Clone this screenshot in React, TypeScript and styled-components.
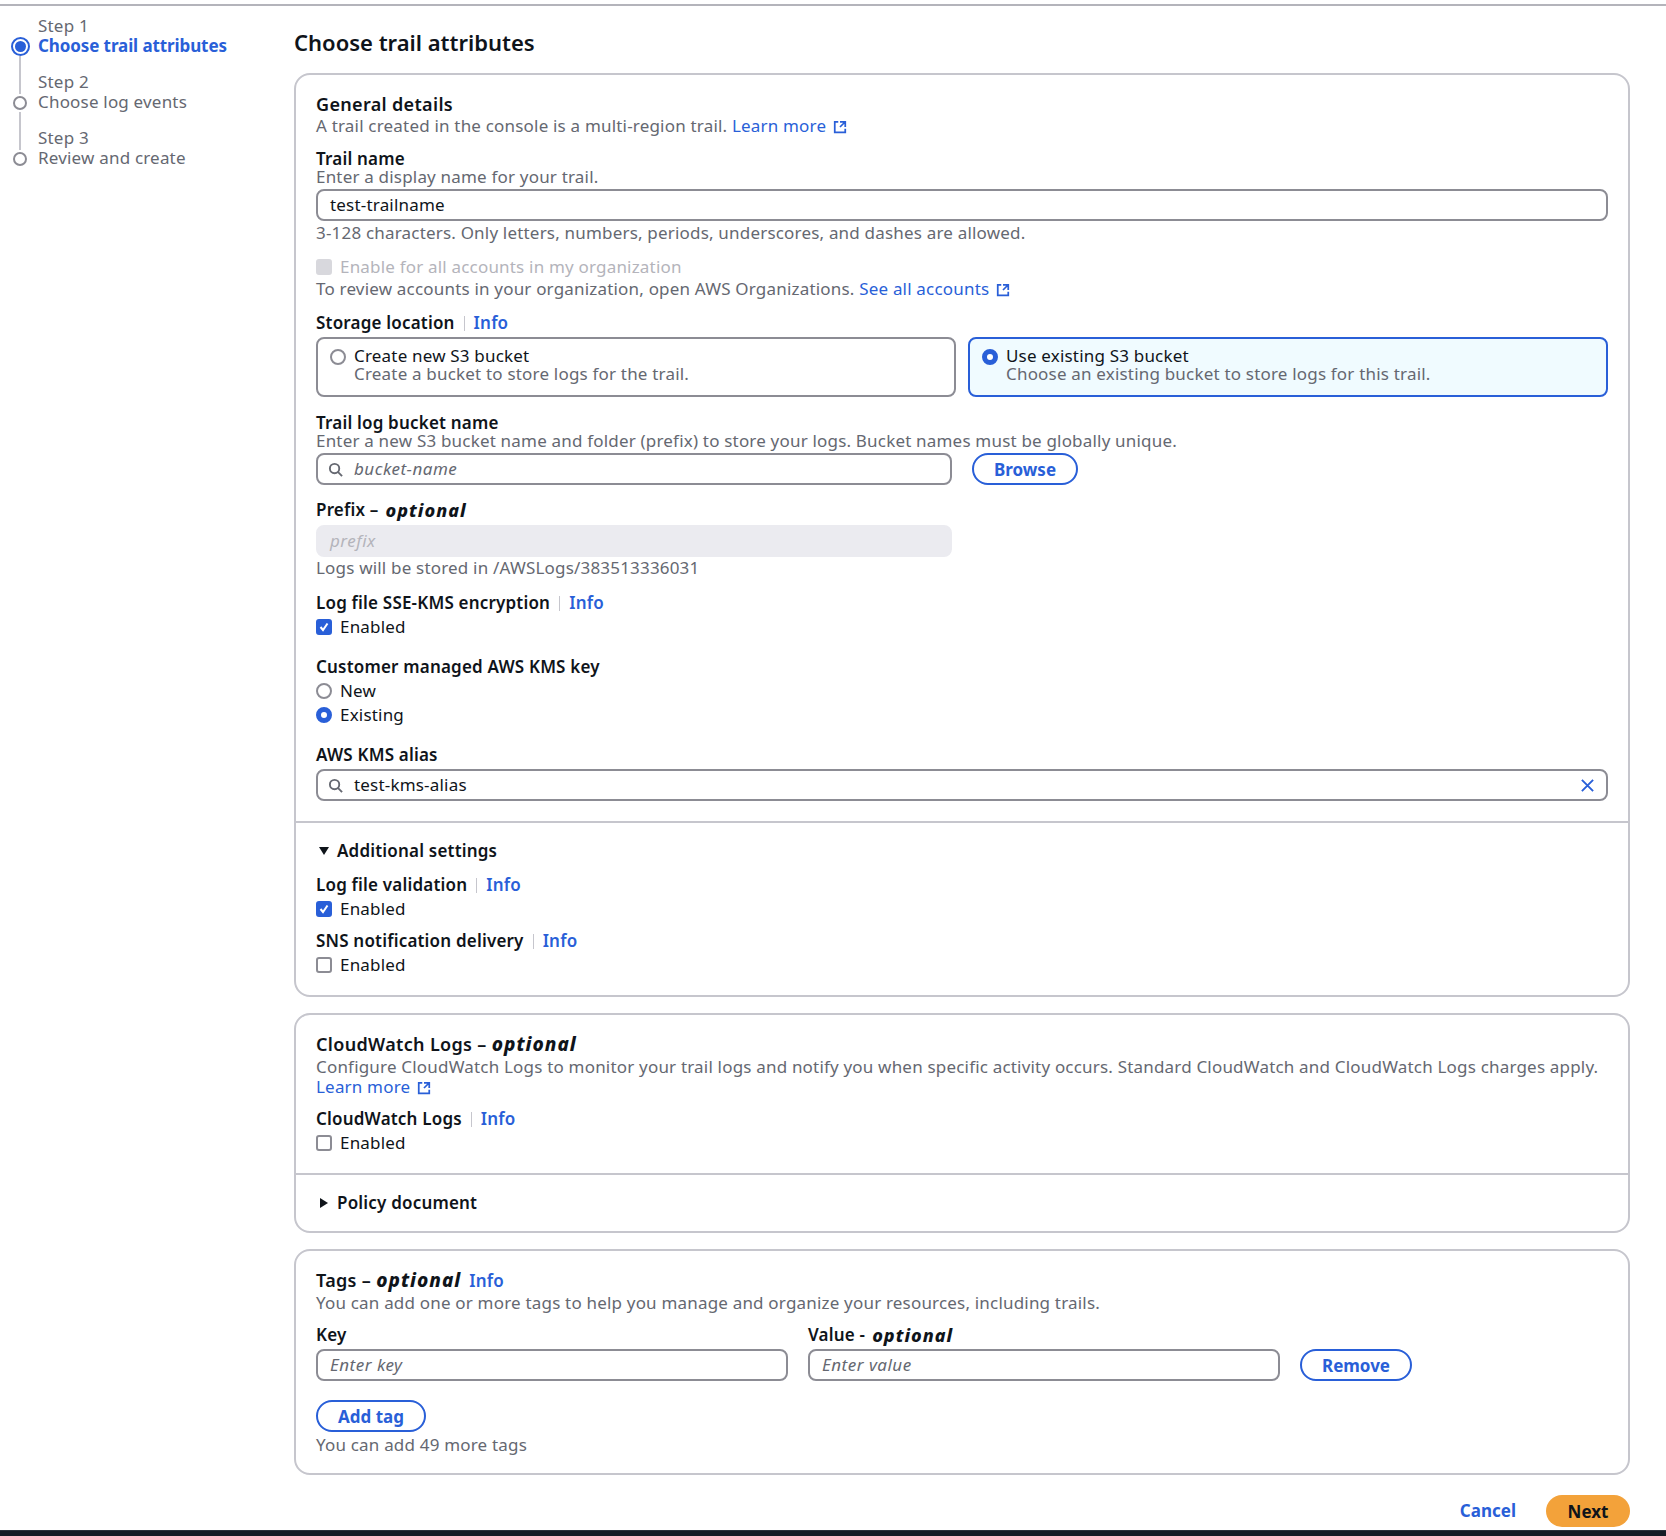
import React from "react";
import styled, { createGlobalStyle } from "styled-components";

const BLUE = "#295fd8";
const INK = "#0f141a";
const MUTED = "#656871";
const FONT = `"Noto Sans", "Open Sans", Arial, sans-serif`;

const Global = createGlobalStyle`
  html, body { margin: 0; padding: 0; background: #fff; }
  body { font-family: ${FONT}; font-size: 17px; line-height: 18px; color: ${INK}; letter-spacing: 0.19px; }
  * { box-sizing: border-box; }
  a { color: ${BLUE}; text-decoration: none; }
`;

const Page = styled.div`
  height: 1536px; overflow: hidden; display: flex; flex-direction: column; padding-top: 4px;
`;
const TopLine = styled.div`height: 2px; background: #b4b4bb; flex: none;`;
const Body = styled.div`flex: 1; display: flex; min-height: 0;`;
const Nav = styled.nav`width: 294px; flex: none; padding: 10px 0 0 10px;`;
const Step = styled.div<{ $first?: boolean }>`
  display: flex; gap: 8px; height: ${p => (p.$first ? "40px" : "56px")};
`;
const Marker = styled.div`
  width: 20px; display: flex; flex-direction: column; align-items: center; justify-content: flex-end; flex: none;
`;
const Connector = styled.div`flex: 1; width: 2px; background: #c6c6cd; margin-bottom: 2px;`;
const Dot = styled.div`
  width: 14px; height: 14px; border: 2px solid #8c8c94; border-radius: 50%; background: #fff; flex: none; margin-bottom: 2px;
`;
const ActiveDot = styled.div`
  width: 19px; height: 19px; border: 2px solid ${BLUE}; border-radius: 50%; flex: none; padding: 2px;
  &::before { content: ""; display: block; width: 11px; height: 11px; background: ${BLUE}; border-radius: 50%; }
`;
const StepText = styled.div<{ $first?: boolean }>`
  padding-top: ${p => (p.$first ? "0" : "16px")}; color: ${MUTED}; line-height: 20px; white-space: nowrap;
`;
const StepTitle = styled.div<{ $active?: boolean }>`
  color: ${p => (p.$active ? BLUE : MUTED)}; font-weight: ${p => (p.$active ? 700 : 400)};
  letter-spacing: ${p => (p.$active ? "-0.1px" : "0.19px")};
`;
const Main = styled.main`width: 1336px; flex: none; display: flex; flex-direction: column;`;
const H1 = styled.h1`
  margin: 0; padding-top: 20px; height: 67px; font-size: 22px; line-height: 32px; font-weight: 600; letter-spacing: 0;
`;
const Card = styled.section`
  border: 2px solid #c6c6cd; border-radius: 16px; margin-bottom: 16px; overflow: hidden;
`;
const Section = styled.div<{ $pt: number; $pb: number }>`
  padding: ${p => p.$pt}px 20px ${p => p.$pb}px 20px;
`;
const Divider = styled.div`height: 2px; background: #c6c6cd;`;
const H2 = styled.h2`
  margin: 0; font-size: 18px; line-height: 22px; font-weight: 600; letter-spacing: 0.33px;
  em { font-size: 19px; font-weight: 800; font-style: italic; letter-spacing: 1px; }
`;
const Desc = styled.div<{ $mt?: number }>`
  color: ${MUTED}; line-height: 20px; margin-top: ${p => p.$mt ?? 0}px;
`;
const Hint = styled.div`color: ${MUTED}; line-height: 18px;`;
const Label = styled.div<{ $mt?: number; $w?: number }>`
  font-weight: 600; line-height: 18px; margin-top: ${p => p.$mt ?? 0}px; display: flex; align-items: center;
  ${p => (p.$w ? `width: ${p.$w}px;` : "")}
  em { font-size: 18px; font-weight: 800; font-style: italic; margin-left: 7px; letter-spacing: 1px; }
`;
const InfoLink = styled.a`
  color: ${BLUE}; font-weight: 600; display: inline-flex; align-items: center;
  &::before { content: ""; width: 1px; height: 15px; background: #c6c6cd; margin: 0 9px; }
`;
const Plain = styled.a`font-weight: 600; margin-left: 8px; font-size: 17px; letter-spacing: 0.19px;`;
const Ext = styled.a`
  svg { width: 14px; height: 14px; margin-left: 7px; vertical-align: -2px; fill: none; stroke: ${BLUE}; stroke-width: 2; }
`;
const Field = styled.div<{ $w?: number; $mt?: number; $disabled?: boolean }>`
  height: 32px; border-radius: 8px; padding: 0 12px; display: flex; align-items: center; gap: 8px;
  margin-top: ${p => p.$mt ?? 4}px;
  ${p => (p.$w ? `width: ${p.$w}px;` : "")}
  flex: ${p => (p.$w ? "none" : "1")};
  border: 2px solid ${p => (p.$disabled ? "#ebebf0" : "#8c8c94")};
  background: ${p => (p.$disabled ? "#ebebf0" : "#fff")};
`;
const SearchField = styled(Field)`padding-left: 10px; padding-right: 11px; gap: 11px;`;
const Value = styled.span`flex: 1; white-space: nowrap;`;
const Placeholder = styled.span<{ $disabled?: boolean }>`
  font-style: italic; flex: 1; letter-spacing: 0.5px; color: ${p => (p.$disabled ? "#b4b4bb" : MUTED)};
`;
const FieldIcon = styled.svg<{ $blue?: boolean }>`
  width: 15px; height: 15px; flex: none; fill: none; stroke: ${p => (p.$blue ? BLUE : MUTED)}; stroke-width: 2;
`;
const Row = styled.div<{ $mt?: number; $gap?: number }>`
  display: flex; gap: ${p => p.$gap ?? 20}px; margin-top: ${p => p.$mt ?? 0}px; align-items: center;
`;
const Option = styled.div<{ $mt?: number; $muted?: boolean }>`
  display: flex; align-items: center; gap: 8px; line-height: 18px; margin-top: ${p => p.$mt ?? 5}px;
  color: ${p => (p.$muted ? "#b4b4bb" : INK)};
`;
const Box = styled.span<{ $state?: "on" | "off" | "disabled" }>`
  width: 16px; height: 16px; border-radius: 3px; flex: none; display: inline-flex; align-items: center; justify-content: center;
  border: 2px solid ${p => (p.$state === "on" ? BLUE : p.$state === "disabled" ? "#d8d8dd" : "#8c8c94")};
  background: ${p => (p.$state === "on" ? BLUE : p.$state === "disabled" ? "#d8d8dd" : "#fff")};
  svg { width: 12px; height: 12px; fill: none; stroke: #fff; stroke-width: 2; }
`;
const Radio = styled.span<{ $on?: boolean }>`
  width: 16px; height: 16px; border-radius: 50%; flex: none; background: #fff;
  border: ${p => (p.$on ? `5px solid ${BLUE}` : "2px solid #8c8c94")};
`;
const Tiles = styled.div`display: grid; grid-template-columns: 1fr 1fr; column-gap: 12px; margin-top: 5px;`;
const Tile = styled.div<{ $on?: boolean }>`
  height: 60px; border-radius: 8px; padding: 8px 12px; display: grid; grid-template-columns: 16px 1fr; column-gap: 8px;
  border: 2px solid ${p => (p.$on ? BLUE : "#8c8c94")}; background: ${p => (p.$on ? "#f0fbff" : "#fff")};
  ${Radio} { margin-top: 2px; }
`;
const Toggle = styled.div`display: flex; align-items: center; gap: 6px; font-weight: 600; line-height: 18px;`;
const Caret = styled.svg`width: 12px; height: 12px; fill: ${INK}; margin: 0 1px 0 2px; flex: none;`;
const OutlineBtn = styled.button<{ $w: number }>`
  width: ${p => p.$w}px; height: 32px; border: 2px solid ${BLUE}; background: #fff; color: ${BLUE}; border-radius: 16px;
  font: 700 17px/1 ${FONT}; padding: 0; flex: none;
`;
const Footer = styled.div`
  display: flex; justify-content: flex-end; align-items: center; gap: 30px; height: 32px; margin-top: 4px;
`;
const CancelLink = styled.a`font-weight: 700; letter-spacing: 0;`;
const NextBtn = styled.button`
  width: 84px; height: 32px; border: 0; border-radius: 16px; background: #f3a23a; color: ${INK}; font: 700 17px/1 ${FONT};
`;
const BottomBar = styled.div`height: 6px; flex: none; background: #161d26; border-top: 1px solid #2c333c; margin-top: auto;`;

const ExtIcon = () => (
  <svg viewBox="0 0 16 16"><path d="M14 8V2H8M14 2 8 8M6 2H2v12h12v-4" /></svg>
);
const SearchIcon = () => (
  <FieldIcon viewBox="0 0 16 16"><circle cx="7" cy="7" r="5" /><path d="m15 15-4.5-4.5" /></FieldIcon>
);
const Check = () => <svg viewBox="0 0 12 12"><path d="M2.5 6 5 9l4.5-6.5" /></svg>;
const CheckOpt = ({ on, mt }: { on?: boolean; mt?: number }) => (
  <Option $mt={mt}><Box $state={on ? "on" : "off"}>{on && <Check />}</Box>Enabled</Option>
);

const STEPS = [
  { n: "Step 2", t: "Choose log events" },
  { n: "Step 3", t: "Review and create" },
];

export default function App() {
  return (
    <Page>
      <Global />
      <TopLine />
      <Body>
        <Nav>
          <Step $first>
            <Marker><ActiveDot /></Marker>
            <StepText $first>
              <div>Step 1</div>
              <StepTitle $active>Choose trail attributes</StepTitle>
            </StepText>
          </Step>
          {STEPS.map(s => (
            <Step key={s.n}>
              <Marker><Connector /><Dot /></Marker>
              <StepText>
                <div>{s.n}</div>
                <StepTitle>{s.t}</StepTitle>
              </StepText>
            </Step>
          ))}
        </Nav>
        <Main>
          <H1>Choose trail attributes</H1>
          <Card>
            <Section $pt={18} $pb={20}>
              <H2>General details</H2>
              <Desc $mt={1}>A trail created in the console is a multi-region trail. <Ext href="#">Learn more<ExtIcon /></Ext></Desc>
              <Label $mt={14}>Trail name</Label>
              <Hint>Enter a display name for your trail.</Hint>
              <Field $mt={3}><Value>test-trailname</Value></Field>
              <Desc $mt={2}>3-128 characters. Only letters, numbers, periods, underscores, and dashes are allowed.</Desc>
              <Option $mt={15} $muted><Box $state="disabled" />Enable for all accounts in my organization</Option>
              <Desc $mt={3}>To review accounts in your organization, open AWS Organizations. <Ext href="#">See all accounts<ExtIcon /></Ext></Desc>
              <Label $mt={15}>Storage location<InfoLink href="#">Info</InfoLink></Label>
              <Tiles>
                <Tile>
                  <Radio />
                  <div>Create new S3 bucket<Hint>Create a bucket to store logs for the trail.</Hint></div>
                </Tile>
                <Tile $on>
                  <Radio $on />
                  <div>Use existing S3 bucket<Hint>Choose an existing bucket to store logs for this trail.</Hint></div>
                </Tile>
              </Tiles>
              <Label $mt={17}>Trail log bucket name</Label>
              <Hint>Enter a new S3 bucket name and folder (prefix) to store your logs. Bucket names must be globally unique.</Hint>
              <Row $mt={3} $gap={20}>
                <SearchField $w={636} $mt={0}><SearchIcon /><Placeholder>bucket-name</Placeholder></SearchField>
                <OutlineBtn $w={106}>Browse</OutlineBtn>
              </Row>
              <Label $mt={16}>Prefix –<em>optional</em></Label>
              <Field $w={636} $mt={6} $disabled><Placeholder $disabled>prefix</Placeholder></Field>
              <Desc $mt={1}>Logs will be stored in /AWSLogs/383513336031</Desc>
              <Label $mt={16}>Log file SSE-KMS encryption<InfoLink href="#">Info</InfoLink></Label>
              <CheckOpt on mt={6} />
              <Label $mt={22}>Customer managed AWS KMS key</Label>
              <Option $mt={6}><Radio />New</Option>
              <Option $mt={6}><Radio $on />Existing</Option>
              <Label $mt={22}>AWS KMS alias</Label>
              <SearchField $mt={5}>
                <SearchIcon />
                <Value>test-kms-alias</Value>
                <FieldIcon $blue viewBox="0 0 16 16"><path d="m2 2 12 12M14 2 2 14" /></FieldIcon>
              </SearchField>
            </Section>
            <Divider />
            <Section $pt={19} $pb={21}>
              <Toggle><Caret viewBox="0 0 12 12"><path d="M1 2h10L6 10z" /></Caret>Additional settings</Toggle>
              <Label $mt={16}>Log file validation<InfoLink href="#">Info</InfoLink></Label>
              <CheckOpt on mt={6} />
              <Label $mt={14}>SNS notification delivery<InfoLink href="#">Info</InfoLink></Label>
              <CheckOpt mt={6} />
            </Section>
          </Card>
          <Card>
            <Section $pt={18} $pb={21}>
              <H2>CloudWatch Logs – <em>optional</em></H2>
              <Desc $mt={2}>Configure CloudWatch Logs to monitor your trail logs and notify you when specific activity occurs. Standard CloudWatch and CloudWatch Logs charges apply.</Desc>
              <Desc><Ext href="#">Learn more<ExtIcon /></Ext></Desc>
              <Label $mt={13}>CloudWatch Logs<InfoLink href="#">Info</InfoLink></Label>
              <CheckOpt mt={6} />
            </Section>
            <Divider />
            <Section $pt={19} $pb={19}>
              <Toggle><Caret viewBox="0 0 12 12"><path d="M2 1v10l8-5z" /></Caret>Policy document</Toggle>
            </Section>
          </Card>
          <Card>
            <Section $pt={18} $pb={18}>
              <H2>Tags – <em>optional</em><Plain href="#">Info</Plain></H2>
              <Desc $mt={1}>You can add one or more tags to help you manage and organize your resources, including trails.</Desc>
              <Row $mt={13} $gap={20}>
                <Label $w={472}>Key</Label>
                <Label>Value -<em>optional</em></Label>
              </Row>
              <Row $mt={5} $gap={20}>
                <Field $w={472} $mt={0}><Placeholder>Enter key</Placeholder></Field>
                <Field $w={472} $mt={0}><Placeholder>Enter value</Placeholder></Field>
                <OutlineBtn $w={112}>Remove</OutlineBtn>
              </Row>
              <Row $mt={19}><OutlineBtn $w={110}>Add tag</OutlineBtn></Row>
              <Desc $mt={3}>You can add 49 more tags</Desc>
            </Section>
          </Card>
          <Footer>
            <CancelLink href="#">Cancel</CancelLink>
            <NextBtn>Next</NextBtn>
          </Footer>
        </Main>
      </Body>
      <BottomBar />
    </Page>
  );
}
